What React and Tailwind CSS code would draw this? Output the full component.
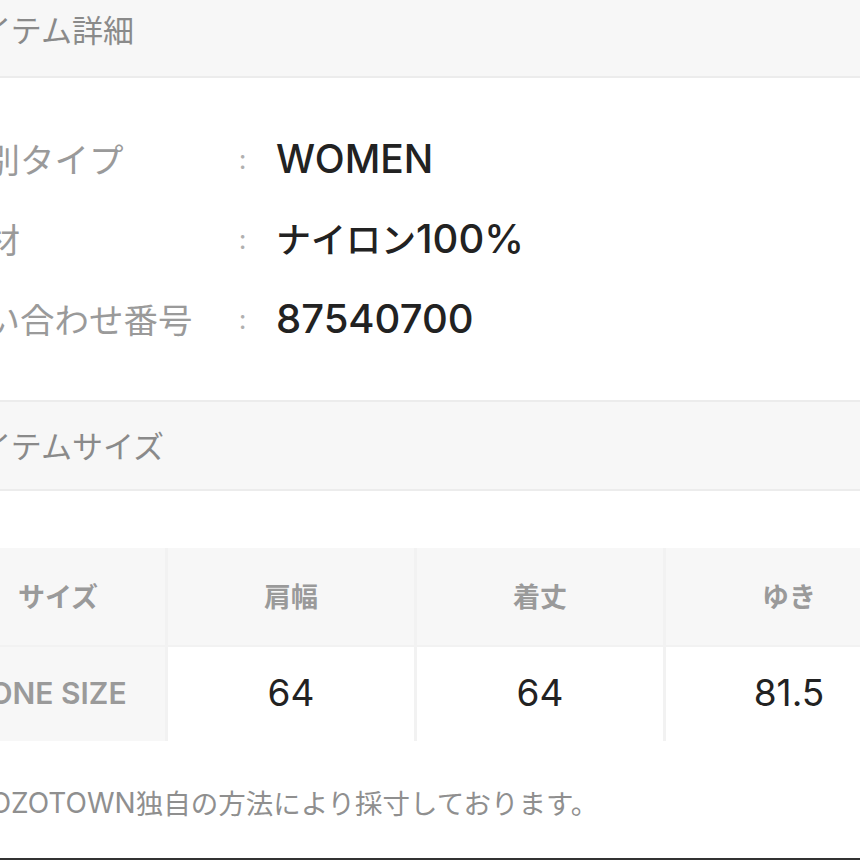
export default function App() {
  const jp = { fontFamily: '"Noto Sans CJK JP", sans-serif' };
  const rows = [
    { label: "性別タイプ", value: <span className="font-['Inter','Noto_Sans_CJK_JP',sans-serif] text-[39px]">WOMEN</span> },
    {
      label: "素材",
      value: (
        <span>
          ナイロン<span className="font-['Inter','Noto_Sans_CJK_JP',sans-serif] text-[40px]">100%</span>
        </span>
      ),
    },
    { label: "問い合わせ番号", value: <span className="font-['Inter','Noto_Sans_CJK_JP',sans-serif] text-[40px]">87540700</span> },
  ];
  return (
    <div className="w-[860px] h-[860px] overflow-hidden bg-white flex flex-col" style={jp}>
      <div className="ml-[-49px] w-[960px] flex flex-col">
        {/* Section header 1 */}
        <div className="h-[78px] bg-[#f7f7f7] border-b-2 border-[#ececec] pt-[12px]">
          <div className="text-[31px] leading-[34px] text-[#8a8a8a]">アイテム詳細</div>
        </div>
        {/* details */}
        <div className="pt-[40px] pb-[42px] flex flex-col">
          {rows.map((r) => (
            <div key={r.label} className="h-[80px] flex items-center">
              <div className="w-[288px] text-[34.5px] leading-[40px] text-[#9a9a9a]">{r.label}</div>
              <div className="w-[37px] text-[26px] leading-[40px] text-[#b0b0b0]">:</div>
              <div className="text-[35px] leading-[44px] font-medium text-[#222]">{r.value}</div>
            </div>
          ))}
        </div>
        {/* Section header 2 */}
        <div className="h-[91px] bg-[#f7f7f7] border-y-2 border-[#ececec] pt-[26px]">
          <div className="text-[31px] leading-[34px] text-[#8a8a8a]">アイテムサイズ</div>
        </div>
        {/* size table */}
        <div className="mt-[57px] grid grid-cols-[214px_246px_246px_246px] grid-rows-[97px_94px] gap-x-[3px] gap-y-[2px] bg-[#f2f2f2]">
          {["サイズ", "肩幅", "着丈", "ゆき"].map((h) => (
            <div key={h} className="bg-[#f7f7f7] flex items-center justify-center text-[27px] font-bold text-[#9a9a9a]">
              {h}
            </div>
          ))}
          <div className="bg-[#f7f7f7] flex items-center justify-center pb-[2px] text-[30px] font-semibold text-[#9a9a9a] font-['Inter','Noto_Sans_CJK_JP',sans-serif]">
            ONE SIZE
          </div>
          {["64", "64", "81.5"].map((v, i) => (
            <div key={i} className="bg-white flex items-center justify-center pb-[2px] text-[37px] text-[#222] font-['Inter','Noto_Sans_CJK_JP',sans-serif]">
              {v}
            </div>
          ))}
        </div>
        {/* note */}
        <div className="mt-[46px] ml-[-6px] h-[32px] flex items-center text-[27.5px] text-[#8f8f8f] whitespace-nowrap">
          <span className="text-[28px]">※</span>
          <span className="font-['Inter','Noto_Sans_CJK_JP',sans-serif] text-[28px]">ZOZOTOWN</span>
          <span>独自の方法により採寸しております。</span>
        </div>
      </div>
      <div className="mt-auto h-[2px] bg-[#333] shrink-0" />
    </div>
  );
}
